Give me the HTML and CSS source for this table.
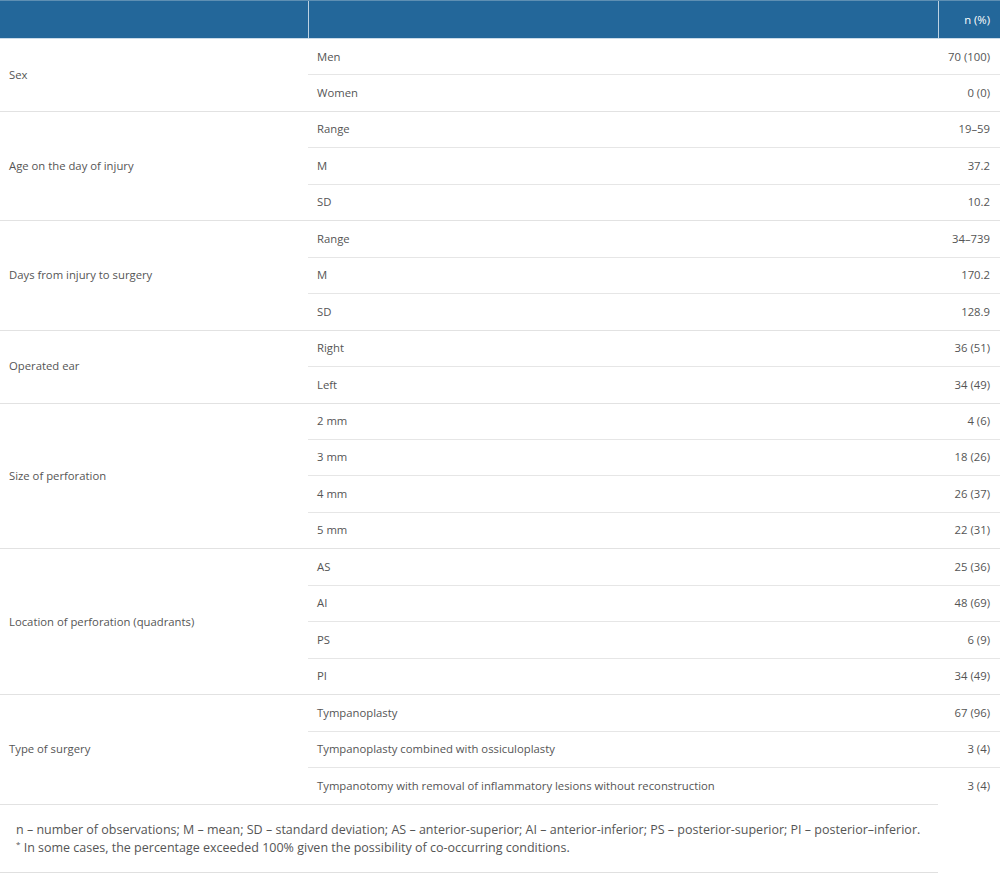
FILE: index.html
```html
<!DOCTYPE html>
<html>
<head>
<meta charset="utf-8">
<link rel="stylesheet" href="styles.css">
</head>
<body>
<div class="wrap">
<table class="data">
  <colgroup><col class="c1"><col class="c2"><col class="c3"></colgroup>
  <thead>
    <tr><th></th><th></th><th class="num">n (%)</th></tr>
  </thead>
  <tbody>
    <tr class="gs"><td rowspan="2" class="lab">Sex</td><td>Men</td><td class="num">70 (100)</td></tr>
    <tr><td>Women</td><td class="num">0 (0)</td></tr>
    <tr class="gs"><td rowspan="3" class="lab">Age on the day of injury</td><td>Range</td><td class="num">19–59</td></tr>
    <tr><td>M</td><td class="num">37.2</td></tr>
    <tr><td>SD</td><td class="num">10.2</td></tr>
    <tr class="gs"><td rowspan="3" class="lab">Days from injury to surgery</td><td>Range</td><td class="num">34–739</td></tr>
    <tr><td>M</td><td class="num">170.2</td></tr>
    <tr><td>SD</td><td class="num">128.9</td></tr>
    <tr class="gs"><td rowspan="2" class="lab">Operated ear</td><td>Right</td><td class="num">36 (51)</td></tr>
    <tr><td>Left</td><td class="num">34 (49)</td></tr>
    <tr class="gs"><td rowspan="4" class="lab">Size of perforation</td><td>2 mm</td><td class="num">4 (6)</td></tr>
    <tr><td>3 mm</td><td class="num">18 (26)</td></tr>
    <tr><td>4 mm</td><td class="num">26 (37)</td></tr>
    <tr><td>5 mm</td><td class="num">22 (31)</td></tr>
    <tr class="gs"><td rowspan="4" class="lab">Location of perforation (quadrants)</td><td>AS</td><td class="num">25 (36)</td></tr>
    <tr><td>AI</td><td class="num">48 (69)</td></tr>
    <tr><td>PS</td><td class="num">6 (9)</td></tr>
    <tr><td>PI</td><td class="num">34 (49)</td></tr>
    <tr class="gs"><td rowspan="3" class="lab">Type of surgery</td><td>Tympanoplasty</td><td class="num">67 (96)</td></tr>
    <tr><td>Tympanoplasty combined with ossiculoplasty</td><td class="num">3 (4)</td></tr>
    <tr><td>Tympanotomy with removal of inflammatory lesions without reconstruction</td><td class="num">3 (4)</td></tr>
  </tbody>
</table>
<div class="foot">
  <p>n – number of observations; M – mean; SD – standard deviation; AS – anterior-superior; AI – anterior-inferior; PS – posterior-superior; PI – posterior–inferior.</p>
  <p><sup>*</sup> In some cases, the percentage exceeded 100% given the possibility of co-occurring conditions.</p>
</div>
</div>
</body>
</html>
```
FILE: styles.css
```css
html, body { margin: 0; padding: 0; background: #fff; }
body { font-family: "Open Sans", "Liberation Sans", sans-serif; color: #555; }
.wrap { width: 1000px; }
.data { width: 1000px; border-collapse: collapse; table-layout: fixed; font-size: 11.3px; line-height: 16.45px; }
.c1 { width: 308px; }
.c2 { width: 630px; }
.c3 { width: 62px; }
.data thead th { background: #23679a; color: #fff; font-weight: normal; height: 18px; padding: 10px 9px 9px; border-top: 1px solid #5e8fb3; border-bottom: 1px solid #c9dbe9; border-left: 1px solid #bcd2e3; text-align: left; }
.data thead th:first-child { border-left: none; }
.data thead th.num { text-align: right; padding-right: 10px; }
.data td { padding: 9.5px 9px; border-top: 1px solid #e6e6e6; vertical-align: middle; }
.data td.lab { padding-left: 9px; }
.data td.num { text-align: right; padding-right: 10px; }
.data tr.gs td { border-top-color: #e2e2e2; }
.data tbody tr:first-child td { border-top: none; }
.foot { width: 938px; box-sizing: border-box; border-top: 1px solid #e2e2e2; border-bottom: 2px solid #e0e0e0; padding: 16px 16px 15px; font-size: 12.5px; line-height: 18px; }
.foot p { margin: 0; }
.foot sup { font-size: 8px; line-height: 0; vertical-align: 5px; }
```
